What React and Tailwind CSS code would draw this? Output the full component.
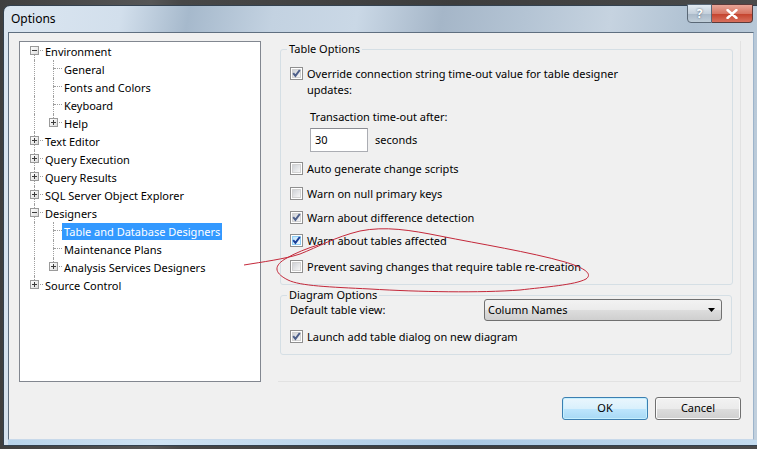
import React from 'react'

const tree = [
  { t: 'Environment', l: 0, e: '-', first: true },
  { t: 'General', l: 1 },
  { t: 'Fonts and Colors', l: 1 },
  { t: 'Keyboard', l: 1 },
  { t: 'Help', l: 1, e: '+', last: true },
  { t: 'Text Editor', l: 0, e: '+' },
  { t: 'Query Execution', l: 0, e: '+' },
  { t: 'Query Results', l: 0, e: '+' },
  { t: 'SQL Server Object Explorer', l: 0, e: '+' },
  { t: 'Designers', l: 0, e: '-' },
  { t: 'Table and Database Designers', l: 1, sel: true },
  { t: 'Maintenance Plans', l: 1 },
  { t: 'Analysis Services Designers', l: 1, e: '+', last: true },
  { t: 'Source Control', l: 0, e: '+', last: true },
]

function Expander({ sign }) {
  return (
    <span className="absolute left-[6px] top-[4px] z-10 flex h-[9px] w-[9px] items-center justify-center border border-[#9a9a9a] bg-[linear-gradient(135deg,#ffffff,#dcdcdc)]">
      <span className="absolute h-px w-[5px] bg-[#3c3c3c]" />
      {sign === '+' && <span className="absolute h-[5px] w-px bg-[#3c3c3c]" />}
    </span>
  )
}

function TreeRow({ item }) {
  return (
    <div className="flex h-[18px] items-center">
      {item.l === 1 && (
        <span className="relative h-full w-[19px] shrink-0">
          <span className="absolute left-[10px] top-0 h-full border-l border-dotted border-[#a0a0a0]" />
        </span>
      )}
      <span className="relative h-full w-[19px] shrink-0">
        {!item.first && <span className="absolute left-[10px] top-0 h-[8px] border-l border-dotted border-[#a0a0a0]" />}
        {!item.last && <span className="absolute left-[10px] top-[8px] h-[10px] border-l border-dotted border-[#a0a0a0]" />}
        <span className="absolute left-[11px] top-[8px] w-[8px] border-t border-dotted border-[#a0a0a0]" />
        {item.e && <Expander sign={item.e} />}
      </span>
      <span className={item.sel ? 'whitespace-nowrap bg-[#3399ff] px-[2px] leading-[17px] text-white' : 'whitespace-nowrap px-[2px] leading-[17px]'}>
        {item.t}
      </span>
    </div>
  )
}

function Check({ on, hot }) {
  return (
    <span className="relative flex h-[13px] w-[13px] shrink-0 items-center justify-center border border-[#8f8f8f] bg-white">
      <span
        className={
          hot
            ? 'h-[9px] w-[9px] border border-[#8fcdf5] bg-[linear-gradient(135deg,#c2e5fb,#f1f9fe)]'
            : 'h-[9px] w-[9px] border border-[#d2d2d2] bg-[linear-gradient(135deg,#cfd2d7,#f6f6f6)]'
        }
      />
      {on && (
        <svg className="absolute left-0 top-0" width="11" height="11" viewBox="0 0 11 11">
          <path d="M2.2 5.2 L4.4 7.8 L8.8 2" fill="none" stroke={hot ? '#1b3f99' : '#4d5f8a'} strokeWidth="2" />
        </svg>
      )}
    </span>
  )
}

function CheckRow({ on, hot, children, className }) {
  return (
    <div className={className}>
      <div className="flex items-start gap-[4px]">
        <span className="mt-[1px]">
          <Check on={on} hot={hot} />
        </span>
        <span className="whitespace-nowrap leading-[16px]">{children}</span>
      </div>
    </div>
  )
}

export default function App() {
  return (
    <div className="relative h-[449px] w-[757px] overflow-hidden bg-[linear-gradient(90deg,#3f3f3f,#565656_20%,#474747_24%,#3d3d3d_60%,#4a4a4a)] font-['Segoe_UI','Noto_Sans',sans-serif] text-[11px] text-black">
      <div className="ml-[3px] mt-[5px] flex h-[441px] w-[770px] flex-col rounded-t-[7px] border border-[#33414f] bg-[linear-gradient(100deg,#dbe6f1_0%,#d2dfec_14%,#a6b9cc_22%,#c3d2e1_32%,#cad8e6_42%,#a5b6c8_52%,#b4c4d4_62%,#c6d3e0_72%,#afc1d2_82%,#c4d2df_100%)]">
        <div className="flex h-[26px] shrink-0 items-start">
          <span className="ml-[7px] mt-[4px] text-[12px] leading-[17px]">Options</span>
          <div className="ml-auto mr-[19px] mt-[-2px] flex">
            <div className="flex h-[19px] w-[25px] items-center justify-center rounded-bl-[4px] border border-[#5a6876] bg-[linear-gradient(#e4ebf2,#c4d0dc_50%,#a9b8c8_51%,#c0ced9)] text-[12px] font-bold leading-none text-white [text-shadow:0_0_2px_#445566]">
              ?
            </div>
            <div className="flex h-[19px] w-[41px] items-center justify-center rounded-br-[4px] border border-l-0 border-[#5a3a3a] bg-[linear-gradient(#e7a597,#d77563_50%,#c3412b_51%,#d8705d)]">
              <svg width="12" height="10" viewBox="0 0 12 10">
                <path d="M1.5 1 L10.5 9 M10.5 1 L1.5 9" stroke="#ffffff" strokeWidth="2.4" strokeLinecap="round" />
                <path d="M1.5 1 L10.5 9 M10.5 1 L1.5 9" stroke="#ffffff" strokeWidth="1.4" />
              </svg>
            </div>
          </div>
        </div>

        <div className="ml-[4px] flex h-[408px] w-[746px] shrink-0 flex-col border border-b-[#c8d9ea] border-l-[#5f6f80] border-r-[#9db4cb] border-t-[#5f6f80] bg-[#f0f0f0] pl-[10px] pt-[8px]">
          <div className="flex h-[341px]">
            <div className="h-[341px] w-[242px] shrink-0 border border-[#828790] bg-white pl-[4px]">
              {tree.map((item) => (
                <TreeRow key={item.t} item={item} />
              ))}
            </div>

            <div className="ml-[17px] flex h-[341px] w-[463px] flex-col border-b border-r border-[#e2e2e2] pl-[2px]">
              <fieldset className="w-[453px] rounded-[3px] border border-[#d5dfe5] pb-[9px] pl-[9px]">
                <legend className="-ml-[3px] px-[2px] leading-[16px]">Table Options</legend>
                <CheckRow on className="mt-[9px]">
                  Override connection string time-out value for table designer
                  <br />
                  updates:
                </CheckRow>
                <div className="ml-[20px] mt-[11px] leading-[16px]">Transaction time-out after:</div>
                <div className="ml-[20px] mt-[3px] flex items-center">
                  <div className="flex h-[24px] w-[58px] items-center border border-[#abadb3] border-t-[#8a8c92] bg-white pl-[4px]">30</div>
                  <span className="ml-[7px]">seconds</span>
                </div>
                <CheckRow className="mt-[9px]">Auto generate change scripts</CheckRow>
                <CheckRow className="mt-[9px]">Warn on null primary keys</CheckRow>
                <CheckRow on className="mt-[8px]">Warn about difference detection</CheckRow>
                <CheckRow on hot className="mt-[7px]">Warn about tables affected</CheckRow>
                <CheckRow className="mt-[10px]">Prevent saving changes that require table re-creation</CheckRow>
              </fieldset>

              <fieldset className="mt-[2px] w-[452px] rounded-[3px] border border-[#d5dfe5] pb-[9px] pl-[9px]">
                <legend className="-ml-[3px] px-[2px] leading-[16px]">Diagram Options</legend>
                <div className="-mt-[4px] flex items-center">
                  <span className="w-[194px] leading-[16px]">Default table view:</span>
                  <div className="flex h-[22px] w-[238px] items-center justify-between rounded-[3px] border border-[#707070] bg-[linear-gradient(#f2f2f2_0%,#ebebeb_50%,#dddddd_51%,#cfcfcf_100%)] pl-[3px] pr-[6px]">
                    <span>Column Names</span>
                    <svg width="7" height="4" viewBox="0 0 7 4">
                      <path d="M0 0 H7 L3.5 4 Z" fill="#000000" />
                    </svg>
                  </div>
                </div>
                <CheckRow on className="mt-[8px]">Launch add table dialog on new diagram</CheckRow>
              </fieldset>
            </div>
          </div>

          <div className="mr-[12px] mt-[15px] flex justify-end gap-[7px]">
            <button className="h-[23px] w-[86px] rounded-[3px] border border-[#3c7fb1] bg-[linear-gradient(#eaf6fd_0%,#d9f0fc_50%,#bee6fd_51%,#a7d9f5_100%)] shadow-[inset_0_0_0_1px_#c5f0ff]">
              OK
            </button>
            <button className="h-[23px] w-[86px] rounded-[3px] border border-[#707070] bg-[linear-gradient(#f2f2f2_0%,#ebebeb_50%,#dddddd_51%,#cfcfcf_100%)] shadow-[inset_0_0_0_1px_#fbfbfb]">
              Cancel
            </button>
          </div>
        </div>

        <div className="ml-[4px] h-[5px] w-[760px] bg-[linear-gradient(90deg,#b7d3ea,#cfe3f3_20%,#a9c8e3_60%,#c4dcef)]" />
      </div>

      <svg className="pointer-events-none absolute left-0 top-0" width="757" height="449" viewBox="0 0 757 449">
        <path
          d="M244 265 C262 262 285 259 300 254 C318 247 335 237 360 231 C385 226 410 230 440 236 C480 244 530 252 565 262 C585 268 593 274 586 279 C575 285 545 287 520 290 C480 293 420 292 370 289 C330 287 300 286 288 280 C276 274 272 267 285 259 C295 253 308 248 318 245"
          fill="none"
          stroke="#c4283a"
          strokeWidth="1"
        />
      </svg>
    </div>
  )
}
